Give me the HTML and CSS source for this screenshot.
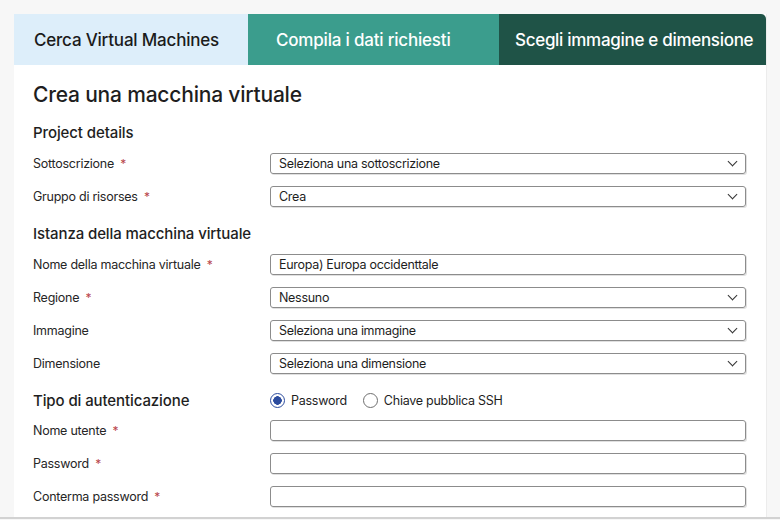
FILE: index.html
```html
<!DOCTYPE html>
<html lang="it">
<head>
  <meta charset="UTF-8">
  <meta name="viewport" content="width=device-width, initial-scale=1.0">
  <title>Crea una macchina virtuale</title>
  <link rel="stylesheet" href="styles.css">
</head>
<body>
  <div class="page">
    <div class="card">
      <div class="tabs">
        <div class="tab tab-search">Cerca Virtual Machines</div>
        <div class="tab tab-data">Compila i dati richiesti</div>
        <div class="tab tab-image">Scegli immagine e dimensione</div>
      </div>

      <div class="panel">
        <h1>Crea una macchina virtuale</h1>

        <h2>Project details</h2>
        <div class="row">
          <label>Sottoscrizione <span class="req">*</span></label>
          <div class="field select">Seleziona una sottoscrizione</div>
        </div>
        <div class="row">
          <label>Gruppo di risorses <span class="req">*</span></label>
          <div class="field select">Crea</div>
        </div>

        <h2 class="section">Istanza della macchina virtuale</h2>
        <div class="row">
          <label>Nome della macchina virtuale <span class="req">*</span></label>
          <div class="field">Europa) Europa occidenttale</div>
        </div>
        <div class="row">
          <label>Regione <span class="req">*</span></label>
          <div class="field select">Nessuno</div>
        </div>
        <div class="row">
          <label>Immagine</label>
          <div class="field select">Seleziona una immagine</div>
        </div>
        <div class="row">
          <label>Dimensione</label>
          <div class="field select">Seleziona una dimensione</div>
        </div>

        <div class="row auth">
          <h2>Tipo di autenticazione</h2>
          <div class="radios">
            <span class="radio checked"></span><span class="radio-label">Password</span>
            <span class="radio"></span><span class="radio-label">Chiave pubblica SSH</span>
          </div>
        </div>
        <div class="row">
          <label>Nome utente <span class="req">*</span></label>
          <div class="field"></div>
        </div>
        <div class="row">
          <label>Password <span class="req">*</span></label>
          <div class="field"></div>
        </div>
        <div class="row">
          <label>Conterma password <span class="req">*</span></label>
          <div class="field"></div>
        </div>
      </div>
    </div>
  </div>
</body>
</html>
```

FILE: styles.css
```css
* {
  padding: 0;
  margin: 0;
  box-sizing: border-box;
}

body {
  background-color: #f7f7f7;
  font-family: Inter, "Noto Sans", sans-serif;
  color: #1e1e1e;
}

.page {
  padding: 14px 14px 0;
  border-bottom: 2px solid #d2d2d2;
}

.card {
  background-color: #ffffff;
  box-shadow: 1px 0 0 #ececec;
}

.tabs {
  display: flex;
  height: 51px;
}

.tab {
  display: flex;
  align-items: center;
  font-size: 17px;
  font-weight: 500;
  color: #ffffff;
  letter-spacing: -0.2px;
}

.tab-search {
  width: 234px;
  padding-left: 20px;
  background-color: #ddeefa;
  color: #1b1b1b;
}

.tab-data {
  width: 251px;
  padding-left: 28px;
  background-color: #3b9d8d;
}

.tab-image {
  flex: 1;
  padding-left: 16px;
  background-color: #1f5347;
  border-top-right-radius: 5px;
  letter-spacing: -0.3px;
}

.panel {
  padding: 17px 20px 4px 19px;
}

h1 {
  font-size: 21px;
  font-weight: 500;
  line-height: 26px;
  letter-spacing: -0.2px;
  margin-bottom: 15px;
}

h2 {
  font-size: 15px;
  font-weight: 500;
  line-height: 20px;
  letter-spacing: -0.1px;
  margin-bottom: 4px;
}

h2.section {
  margin-top: 11px;
}

.row {
  display: flex;
  align-items: center;
  height: 33px;
}

.row label {
  width: 237px;
  font-size: 12.5px;
  letter-spacing: -0.25px;
  color: #262626;
}

.req {
  color: #b8444a;
  font-size: 12px;
  margin-left: 3px;
}

.field {
  flex: 1;
  height: 21px;
  border: 1px solid #8c8c8c;
  border-radius: 3px;
  box-shadow: 1px 1px 0 rgba(0, 0, 0, 0.12);
  font-size: 12.5px;
  letter-spacing: -0.3px;
  line-height: 19px;
  padding-left: 8px;
  color: #1e1e1e;
}

.select {
  position: relative;
}

.select::after {
  content: "";
  position: absolute;
  right: 9px;
  top: 4px;
  width: 6px;
  height: 6px;
  border-right: 1.2px solid #333;
  border-bottom: 1.2px solid #333;
  transform: rotate(45deg);
}

.auth {
  height: 27px;
  margin-top: 7px;
}

.auth h2 {
  width: 237px;
  font-size: 15px;
  margin: 0;
}

.radios {
  display: flex;
  align-items: center;
  font-size: 12.5px;
  letter-spacing: -0.25px;
}

.radio {
  width: 15px;
  height: 15px;
  border: 1px solid #6f6f6f;
  border-radius: 50%;
  margin-right: 6px;
}

.radio.checked {
  border: 1.5px solid #2c4c9e;
  background: radial-gradient(circle, #2c4c9e 0 4px, #ffffff 4.5px);
}

.radio-label {
  margin-right: 16px;
}
```
